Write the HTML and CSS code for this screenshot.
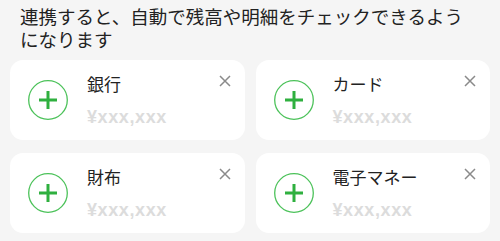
FILE: index.html
```html
<!DOCTYPE html>
<html lang="ja">
<head>
<meta charset="utf-8">
<link rel="stylesheet" href="styles.css">
</head>
<body>
<div class="page">
  <p class="intro">連携すると、自動で残高や明細をチェックできるようになります</p>
  <div class="grid">
    <div class="card">
      <div class="add"><svg viewBox="0 0 40 40" width="40" height="40"><circle cx="20" cy="20" r="19.3" fill="none" stroke="#4cc25a" stroke-width="1.3"/><path d="M11 20H29M20 11V29" stroke="#2fb03f" stroke-width="3"/></svg></div>
      <div class="info"><div class="title">銀行</div><div class="amount">¥xxx,xxx</div></div>
      <div class="close"><svg viewBox="0 0 12 12" width="12" height="12"><path d="M1 1L11 11M11 1L1 11" stroke="#8a8a8a" stroke-width="1.5"/></svg></div>
    </div>
    <div class="card">
      <div class="add"><svg viewBox="0 0 40 40" width="40" height="40"><circle cx="20" cy="20" r="19.3" fill="none" stroke="#4cc25a" stroke-width="1.3"/><path d="M11 20H29M20 11V29" stroke="#2fb03f" stroke-width="3"/></svg></div>
      <div class="info"><div class="title">カード</div><div class="amount">¥xxx,xxx</div></div>
      <div class="close"><svg viewBox="0 0 12 12" width="12" height="12"><path d="M1 1L11 11M11 1L1 11" stroke="#8a8a8a" stroke-width="1.5"/></svg></div>
    </div>
    <div class="card">
      <div class="add"><svg viewBox="0 0 40 40" width="40" height="40"><circle cx="20" cy="20" r="19.3" fill="none" stroke="#4cc25a" stroke-width="1.3"/><path d="M11 20H29M20 11V29" stroke="#2fb03f" stroke-width="3"/></svg></div>
      <div class="info"><div class="title">財布</div><div class="amount">¥xxx,xxx</div></div>
      <div class="close"><svg viewBox="0 0 12 12" width="12" height="12"><path d="M1 1L11 11M11 1L1 11" stroke="#8a8a8a" stroke-width="1.5"/></svg></div>
    </div>
    <div class="card">
      <div class="add"><svg viewBox="0 0 40 40" width="40" height="40"><circle cx="20" cy="20" r="19.3" fill="none" stroke="#4cc25a" stroke-width="1.3"/><path d="M11 20H29M20 11V29" stroke="#2fb03f" stroke-width="3"/></svg></div>
      <div class="info"><div class="title">電子マネー</div><div class="amount">¥xxx,xxx</div></div>
      <div class="close"><svg viewBox="0 0 12 12" width="12" height="12"><path d="M1 1L11 11M11 1L1 11" stroke="#8a8a8a" stroke-width="1.5"/></svg></div>
    </div>
  </div>
</div>
</body>
</html>
```
FILE: styles.css
```css
html, body {
  margin: 0;
  padding: 0;
  background: #f5f5f5;
}
body {
  font-family: "Noto Sans CJK JP", "Noto Sans", sans-serif;
  color: #222;
}
.page {
  padding: 5px 10px 0 10px;
}
.intro {
  margin: 0 0 9px 0;
  padding: 0 0 0 10px;
  width: 452px;
  font-size: 18.5px;
  line-height: 23px;
  text-spacing-trim: space-all;
  color: #222;
}
.grid {
  display: grid;
  grid-template-columns: 1fr 1fr;
  column-gap: 11px;
  row-gap: 13px;
}
.card {
  background: #fff;
  border-radius: 13px;
  height: 80px;
  display: flex;
  align-items: center;
  padding: 0 14px 0 18px;
  box-sizing: border-box;
}
.add {
  width: 40px;
  height: 40px;
  flex: none;
  display: flex;
}
.info {
  flex: 1;
  margin-left: 19px;
  display: flex;
  flex-direction: column;
  gap: 12px;
  margin-top: 0;
}
.title {
  font-size: 17px;
  line-height: 22px;
  color: #222;
}
.amount {
  font-family: "Liberation Sans", Arial, sans-serif;
  font-weight: bold;
  font-size: 18px;
  line-height: 20px;
  letter-spacing: 0.6px;
  color: #dcdcdc;
}
.close {
  align-self: flex-start;
  margin-top: 15px;
  width: 12px;
  height: 12px;
  display: flex;
}
```
